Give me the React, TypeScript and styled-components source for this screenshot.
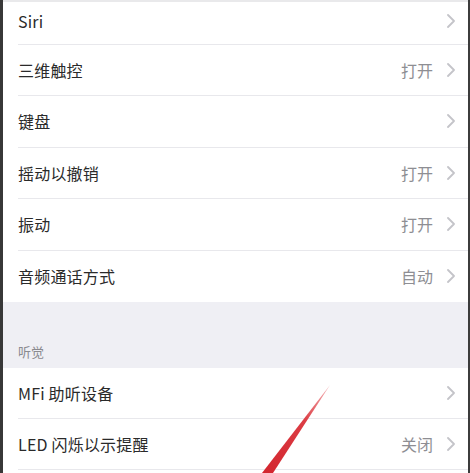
import React from "react";
import styled, { createGlobalStyle } from "styled-components";

const Global = createGlobalStyle`
  html, body { margin: 0; padding: 0; background: #ffffff; }
  body { font-family: "Noto Sans CJK SC", "Noto Sans", sans-serif; }
`;

const Frame = styled.div`
  position: relative;
  width: 470px;
  height: 473px;
  overflow: hidden;
  box-sizing: border-box;
  border-left: 3px solid #383838;
  border-right: 2px solid #3c3c3c;
  background: #ffffff;
  display: flex;
  flex-direction: column;
`;

const TopBand = styled.div`
  height: 2px;
  flex: none;
  background: #e9e9eb;
`;

const Group = styled.div`
  display: flex;
  flex-direction: column;
  background: #ffffff;
`;

const Row = styled.div<{ $h: number; $last?: boolean; $pb?: number }>`
  flex: none;
  box-sizing: border-box;
  height: ${(p) => p.$h}px;
  margin-left: 15px;
  padding-right: 13px;
  padding-bottom: ${(p) => p.$pb ?? 0}px;
  display: flex;
  align-items: center;
  border-bottom: ${(p) => (p.$last ? "none" : "1px solid #e8e8ec")};
`;

const Label = styled.span`
  flex: 1;
  font-size: 16px;
  line-height: 20px;
  color: #2a2a2a;
  letter-spacing: 0.2px;
`;

const Value = styled.span`
  font-size: 16px;
  line-height: 20px;
  color: #8e8e93;
  margin-right: 14px;
`;

const SectionGap = styled.div`
  flex: none;
  height: 66px;
  box-sizing: border-box;
  background: #efeff4;
  display: flex;
  align-items: flex-end;
  padding: 0 0 7px 15px;
`;

const SectionTitle = styled.span`
  font-size: 13px;
  line-height: 18px;
  color: #8a8a8f;
`;

const Arrow = styled.svg`
  position: absolute;
  left: -3px;
  top: 0;
  pointer-events: none;
`;

const Chevron = () => (
  <svg width="8" height="14" viewBox="0 0 8 14" fill="none">
    <path d="M1 1 L7 7 L1 13" stroke="#c4c4c9" strokeWidth="1.8" strokeLinecap="round" strokeLinejoin="round" />
  </svg>
);

type Item = { label: string; value?: string; h: number; last?: boolean; pb?: number };

const group1: Item[] = [
  { label: "Siri", h: 42.5, pb: 3 },
  { label: "三维触控", value: "打开", h: 51.5 },
  { label: "键盘", h: 51.5 },
  { label: "摇动以撤销", value: "打开", h: 51.5 },
  { label: "振动", value: "打开", h: 51.5 },
  { label: "音频通话方式", value: "自动", h: 51.5, last: true },
];

const group2: Item[] = [
  { label: "MFi 助听设备", h: 50.5 },
  { label: "LED 闪烁以示提醒", value: "关闭", h: 51.5 },
];

const renderRow = (it: Item) => (
  <Row key={it.label} $h={it.h} $last={it.last} $pb={it.pb}>
    <Label>{it.label}</Label>
    {it.value && <Value>{it.value}</Value>}
    <Chevron />
  </Row>
);

export default function App() {
  return (
    <>
      <Global />
      <Frame>
        <TopBand />
        <Group>{group1.map(renderRow)}</Group>
        <SectionGap>
          <SectionTitle>听觉</SectionTitle>
        </SectionGap>
        <Group>{group2.map(renderRow)}</Group>
        <Arrow width="470" height="473" viewBox="0 0 470 473">
          <defs>
            <linearGradient id="ar" x1="330" y1="385" x2="265" y2="473" gradientUnits="userSpaceOnUse">
              <stop offset="0" stopColor="#f5b5b8" />
              <stop offset="0.4" stopColor="#dc3d44" />
              <stop offset="1" stopColor="#d3262f" />
            </linearGradient>
          </defs>
          <polygon points="330,385 273,473 262,473" fill="url(#ar)" />
        </Arrow>
      </Frame>
    </>
  );
}
